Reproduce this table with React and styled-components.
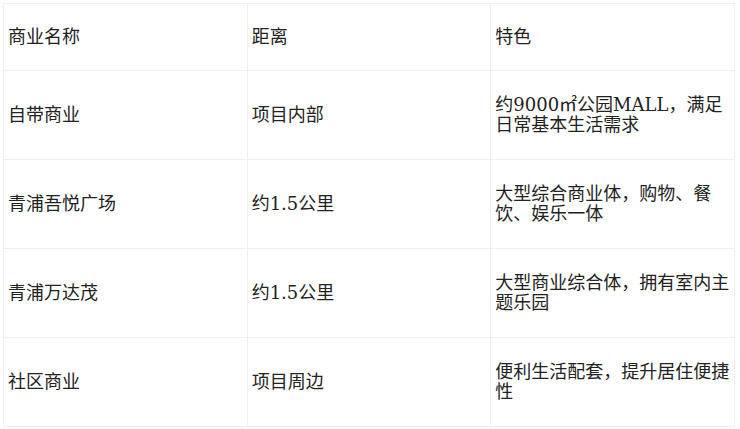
import React from "react";
import styled, { createGlobalStyle } from "styled-components";

const Global = createGlobalStyle`
  html, body { margin: 0; padding: 0; background: #fff; }
  body { font-family: "DejaVu Serif", "Noto Sans CJK SC", serif; color: #222; }
`;

const Page = styled.div`
  padding: 3px 5px 3px 3px;
`;

const Table = styled.table`
  width: 100%;
  border-collapse: collapse;
  table-layout: fixed;
  font-size: 18px;
  line-height: 20px;
`;

const Row = styled.tr`
  height: ${(p) => (p.$head ? 67 : 89)}px;
`;

const Cell = styled.td`
  border: 1px solid #efefef;
  padding: 0 4px;
  vertical-align: middle;
  text-align: left;
  font-weight: normal;
`;

const rows = [
  ["自带商业", "项目内部", "约9000㎡公园MALL，满足日常基本生活需求"],
  ["青浦吾悦广场", "约1.5公里", "大型综合商业体，购物、餐饮、娱乐一体"],
  ["青浦万达茂", "约1.5公里", "大型商业综合体，拥有室内主题乐园"],
  ["社区商业", "项目周边", "便利生活配套，提升居住便捷性"],
];

export default function App() {
  return (
    <Page>
      <Global />
      <Table>
        <thead>
          <Row $head>
            <Cell as="th">商业名称</Cell>
            <Cell as="th">距离</Cell>
            <Cell as="th">特色</Cell>
          </Row>
        </thead>
        <tbody>
          {rows.map((r) => (
            <Row key={r[0]}>
              {r.map((c, i) => (
                <Cell key={i}>{c}</Cell>
              ))}
            </Row>
          ))}
        </tbody>
      </Table>
    </Page>
  );
}
